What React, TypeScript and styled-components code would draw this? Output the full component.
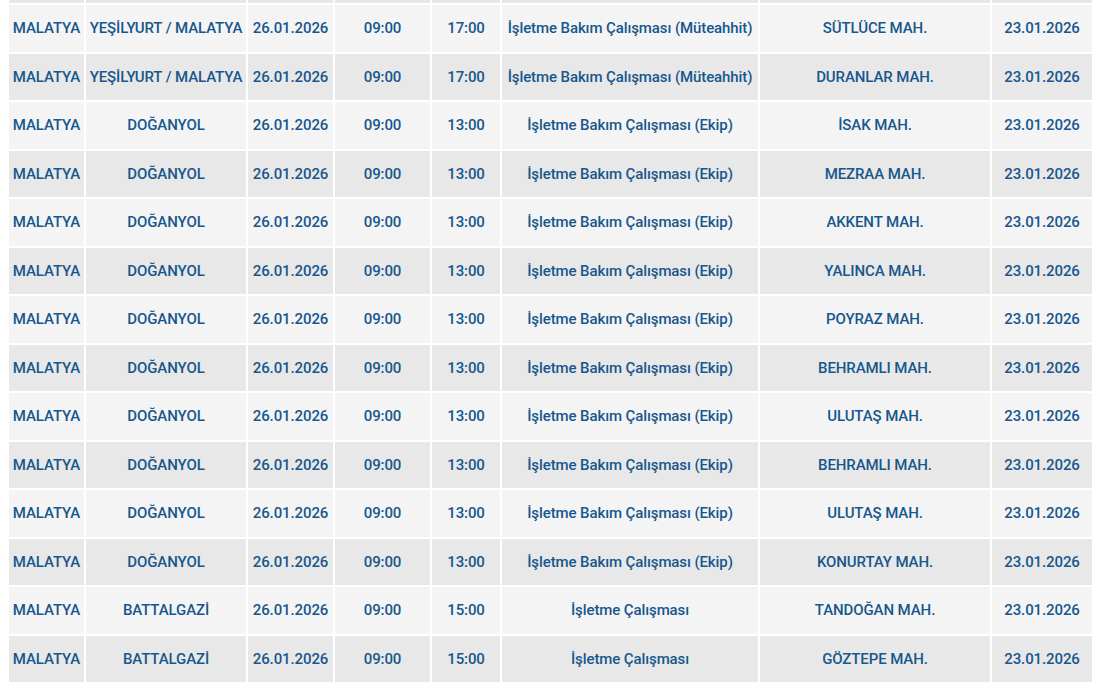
import * as React from 'react';
import styled, { createGlobalStyle } from 'styled-components';

const GlobalStyle = createGlobalStyle`
  html, body {
    margin: 0;
    padding: 0;
    background: #ffffff;
    overflow: hidden;
  }
`;

const Page = styled.div`
  padding-left: 7px;
  margin-top: -2px;
`;

const Table = styled.table`
  width: 1087px;
  table-layout: fixed;
  border-collapse: separate;
  border-spacing: 2px;
  font-family: Roboto, "Liberation Sans", sans-serif;
  font-weight: 500;
  font-size: 15px;
  color: #17578d;
`;

const Row = styled.tr<{ $odd: boolean }>`
  height: 46.5px;
  background: ${(p) => (p.$odd ? '#f4f4f4' : '#e8e8e8')};
`;

// the bottom edge of the row above, scrolled almost out of view
const EdgeRow = styled.tr`
  height: 3px;
  background: #e8e8e8;
  td {
    padding: 0;
    line-height: 0;
  }
`;

const Cell = styled.td`
  padding: 0 3px;
  text-align: center;
  vertical-align: middle;
  white-space: nowrap;
  letter-spacing: -0.1px;
`;

const widths = [75, 160, 85, 95, 68, 256, 230, 100];

type Outage = [string, string, string, string, string, string, string, string];

const muteahhit = 'İşletme Bakım Çalışması (Müteahhit)';
const ekip = 'İşletme Bakım Çalışması (Ekip)';

const dogan = (mah: string): Outage => ['MALATYA', 'DOĞANYOL', '26.01.2026', '09:00', '13:00', ekip, mah, '23.01.2026'];
const battal = (mah: string): Outage => ['MALATYA', 'BATTALGAZİ', '26.01.2026', '09:00', '15:00', 'İşletme Çalışması', mah, '23.01.2026'];
const yesil = (mah: string): Outage => ['MALATYA', 'YEŞİLYURT / MALATYA', '26.01.2026', '09:00', '17:00', muteahhit, mah, '23.01.2026'];

const rows: Outage[] = [
  yesil('SÜTLÜCE MAH.'),
  yesil('DURANLAR MAH.'),
  dogan('İSAK MAH.'),
  dogan('MEZRAA MAH.'),
  dogan('AKKENT MAH.'),
  dogan('YALINCA MAH.'),
  dogan('POYRAZ MAH.'),
  dogan('BEHRAMLI MAH.'),
  dogan('ULUTAŞ MAH.'),
  dogan('BEHRAMLI MAH.'),
  dogan('ULUTAŞ MAH.'),
  dogan('KONURTAY MAH.'),
  battal('TANDOĞAN MAH.'),
  battal('GÖZTEPE MAH.'),
];

export default function App() {
  return (
    <Page>
      <GlobalStyle />
      <Table>
        <colgroup>
          {widths.map((w, i) => (
            <col key={i} style={{ width: w }} />
          ))}
        </colgroup>
        <tbody>
          <EdgeRow>
            {widths.map((_, i) => (
              <td key={i} />
            ))}
          </EdgeRow>
          {rows.map((r, i) => (
            <Row key={i} $odd={i % 2 === 0}>
              {r.map((c, j) => (
                <Cell key={j}>{c}</Cell>
              ))}
            </Row>
          ))}
        </tbody>
      </Table>
    </Page>
  );
}
